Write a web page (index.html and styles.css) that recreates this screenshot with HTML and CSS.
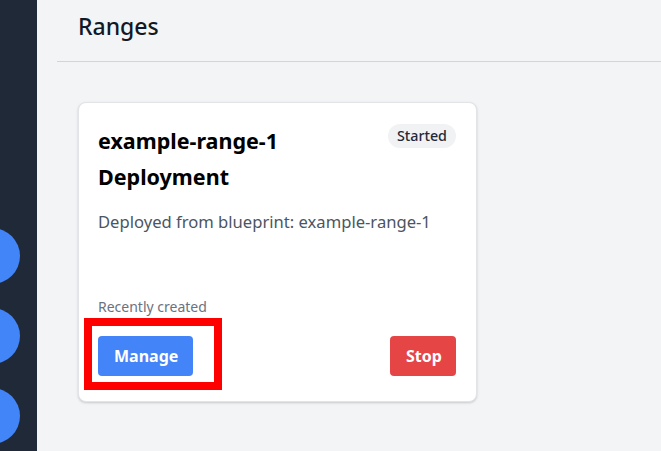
FILE: index.html
```html
<!DOCTYPE html>
<html>
<head>
<meta charset="utf-8">
<link rel="stylesheet" href="styles.css">
</head>
<body>
<div class="app">
  <aside class="sidebar">
    <span class="avatar"></span>
    <span class="avatar"></span>
    <span class="avatar"></span>
  </aside>
  <main class="main">
    <header class="header"><h1>Ranges</h1></header>
    <section class="content">
      <div class="card">
        <div class="card-top">
          <h2 class="title">example-range-1 Deployment</h2>
          <span class="badge">Started</span>
        </div>
        <p class="desc">Deployed from blueprint: example-range-1</p>
        <p class="meta">Recently created</p>
        <div class="actions">
          <div class="highlight-wrap">
            <button class="btn btn-blue">Manage</button>
            <span class="highlight"></span>
          </div>
          <button class="btn btn-red">Stop</button>
        </div>
      </div>
    </section>
  </main>
</div>
</body>
</html>
```

FILE: styles.css
```css
* { box-sizing: border-box; }
html, body { margin: 0; padding: 0; }
body {
  font-family: "Noto Sans", "Open Sans", sans-serif;
  background: #f3f4f6;
  width: 661px;
  height: 451px;
  overflow: hidden;
}
.app { display: flex; height: 451px; }
.sidebar {
  width: 37px;
  flex: none;
  background: #1f2937;
  display: flex;
  flex-direction: column;
  gap: 24px;
  padding-top: 228px;
  overflow: hidden;
}
.avatar {
  display: block;
  width: 56px;
  height: 56px;
  border-radius: 50%;
  background: #4285f8;
  margin-left: -36px;
  flex: none;
}
.main { flex: 1; display: flex; flex-direction: column; padding-left: 20px; }
.header {
  height: 62px;
  border-bottom: 1px solid #d1d5db;
  padding-left: 21px;
  display: flex;
  align-items: flex-start;
}
.header h1 {
  margin: 9px 0 0;
  font-size: 23px;
  font-weight: 500;
  color: #111827;
  line-height: 34px;
}
.content { padding: 40px 0 0 21px; }
.card {
  width: 399px;
  height: 300px;
  background: #fff;
  border: 1px solid #e2e4e8;
  border-radius: 8px;
  box-shadow: 0 1px 3px rgba(0,0,0,0.12), 0 1px 2px rgba(0,0,0,0.06);
  padding: 20px 20px 25px 19px;
  display: flex;
  flex-direction: column;
}
.card-top { display: flex; justify-content: space-between; align-items: flex-start; }
.title {
  margin: 0;
  width: 220px;
  font-size: 21.5px;
  font-weight: 700;
  line-height: 36px;
  color: #000;
}
.badge {
  margin-top: 1px;
  background: #f1f2f4;
  border-radius: 12px;
  padding: 0 9px;
  height: 24px;
  line-height: 24px;
  font-size: 14.3px;
  font-weight: 500;
  color: #1f2937;
}
.desc {
  margin: 15px 0 0;
  font-size: 16.6px;
  line-height: 24px;
  color: #4b5563;
}
.meta {
  margin: auto 0 0;
  font-size: 14px;
  line-height: 20px;
  color: #6b7280;
}
.actions {
  margin-top: 19px;
  display: flex;
  justify-content: space-between;
  align-items: center;
}
.highlight-wrap { position: relative; }
.highlight {
  position: absolute;
  left: -14px;
  top: -18px;
  width: 138px;
  height: 72px;
  border: 8px solid #ff0000;
}
.btn {
  font-family: inherit;
  border: none;
  border-radius: 4px;
  height: 40px;
  font-size: 16px;
  font-weight: 700;
  color: #fff;
  padding: 0 16px;
  display: block;
}
.btn-blue { background: #4384f8; width: 95px; }
.btn-red { background: #e54545; width: 66px; }
```
